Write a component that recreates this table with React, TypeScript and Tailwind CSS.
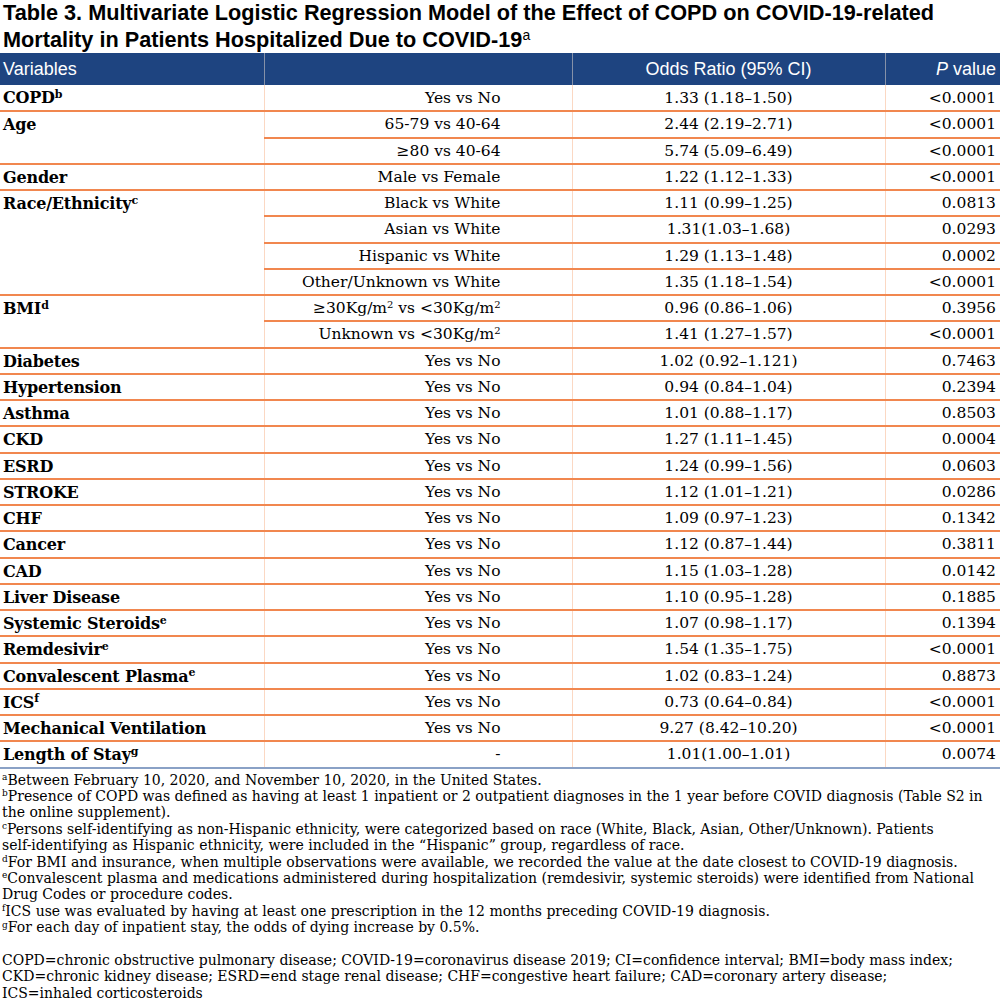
import React from 'react'

type Row = { v?: string; sup?: string; span?: number; cmp: React.ReactNode; or: string; p: string }

const m2 = (
  <>
    Kg/m<sup className="text-[10px]">2</sup>
  </>
)

const rows: Row[] = [
  { v: 'COPD', sup: 'b', cmp: 'Yes vs No', or: '1.33 (1.18–1.50)', p: '<0.0001' },
  { v: 'Age', span: 2, cmp: '65-79 vs 40-64', or: '2.44 (2.19–2.71)', p: '<0.0001' },
  { cmp: '≥80 vs 40-64', or: '5.74 (5.09–6.49)', p: '<0.0001' },
  { v: 'Gender', cmp: 'Male vs Female', or: '1.22 (1.12–1.33)', p: '<0.0001' },
  { v: 'Race/Ethnicity', sup: 'c', span: 4, cmp: 'Black vs White', or: '1.11 (0.99–1.25)', p: '0.0813' },
  { cmp: 'Asian vs White', or: '1.31(1.03–1.68)', p: '0.0293' },
  { cmp: 'Hispanic vs White', or: '1.29 (1.13–1.48)', p: '0.0002' },
  { cmp: 'Other/Unknown vs White', or: '1.35 (1.18–1.54)', p: '<0.0001' },
  {
    v: 'BMI',
    sup: 'd',
    span: 2,
    cmp: (
      <>
        ≥30{m2} vs &lt;30{m2}
      </>
    ),
    or: '0.96 (0.86–1.06)',
    p: '0.3956',
  },
  {
    cmp: (
      <>
        Unknown vs &lt;30{m2}
      </>
    ),
    or: '1.41 (1.27–1.57)',
    p: '<0.0001',
  },
  { v: 'Diabetes', cmp: 'Yes vs No', or: '1.02 (0.92–1.121)', p: '0.7463' },
  { v: 'Hypertension', cmp: 'Yes vs No', or: '0.94 (0.84–1.04)', p: '0.2394' },
  { v: 'Asthma', cmp: 'Yes vs No', or: '1.01 (0.88–1.17)', p: '0.8503' },
  { v: 'CKD', cmp: 'Yes vs No', or: '1.27 (1.11–1.45)', p: '0.0004' },
  { v: 'ESRD', cmp: 'Yes vs No', or: '1.24 (0.99–1.56)', p: '0.0603' },
  { v: 'STROKE', cmp: 'Yes vs No', or: '1.12 (1.01–1.21)', p: '0.0286' },
  { v: 'CHF', cmp: 'Yes vs No', or: '1.09 (0.97–1.23)', p: '0.1342' },
  { v: 'Cancer', cmp: 'Yes vs No', or: '1.12 (0.87–1.44)', p: '0.3811' },
  { v: 'CAD', cmp: 'Yes vs No', or: '1.15 (1.03–1.28)', p: '0.0142' },
  { v: 'Liver Disease', cmp: 'Yes vs No', or: '1.10 (0.95–1.28)', p: '0.1885' },
  { v: 'Systemic Steroids', sup: 'e', cmp: 'Yes vs No', or: '1.07 (0.98–1.17)', p: '0.1394' },
  { v: 'Remdesivir', sup: 'e', cmp: 'Yes vs No', or: '1.54 (1.35–1.75)', p: '<0.0001' },
  { v: 'Convalescent Plasma', sup: 'e', cmp: 'Yes vs No', or: '1.02 (0.83–1.24)', p: '0.8873' },
  { v: 'ICS', sup: 'f', cmp: 'Yes vs No', or: '0.73 (0.64–0.84)', p: '<0.0001' },
  { v: 'Mechanical Ventilation', cmp: 'Yes vs No', or: '9.27 (8.42–10.20)', p: '<0.0001' },
  { v: 'Length of Stay', sup: 'g', cmp: '-', or: '1.01(1.00–1.01)', p: '0.0074' },
]

const notes: [string, string[]][] = [
  ['a', ['Between February 10, 2020, and November 10, 2020, in the United States.']],
  [
    'b',
    [
      'Presence of COPD was defined as having at least 1 inpatient or 2 outpatient diagnoses in the 1 year before COVID diagnosis (Table S2 in',
      'the online supplement).',
    ],
  ],
  [
    'c',
    [
      'Persons self-identifying as non-Hispanic ethnicity, were categorized based on race (White, Black, Asian, Other/Unknown). Patients',
      'self-identifying as Hispanic ethnicity, were included in the “Hispanic” group, regardless of race.',
    ],
  ],
  ['d', ['For BMI and insurance, when multiple observations were available, we recorded the value at the date closest to COVID-19 diagnosis.']],
  [
    'e',
    [
      'Convalescent plasma and medications administered during hospitalization (remdesivir, systemic steroids) were identified from National',
      'Drug Codes or procedure codes.',
    ],
  ],
  ['f', ['ICS use was evaluated by having at least one prescription in the 12 months preceding COVID-19 diagnosis.']],
  ['g', ['For each day of inpatient stay, the odds of dying increase by 0.5%.']],
]

const abbrev = [
  'COPD=chronic obstructive pulmonary disease; COVID-19=coronavirus disease 2019; CI=confidence interval; BMI=body mass index;',
  'CKD=chronic kidney disease; ESRD=end stage renal disease; CHF=congestive heart failure; CAD=coronary artery disease;',
  'ICS=inhaled corticosteroids',
]

const serif = "font-['DejaVu_Serif',serif]"

export default function App() {
  const last = rows.length - 1
  return (
    <div className="w-[1000px] overflow-hidden bg-white text-black">
      <h1 className="px-[3px] pt-[1.5px] font-['Liberation_Sans',Arial,sans-serif] text-[21.7px] font-bold leading-[22px]">
        <span className="block">Table 3. Multivariate Logistic Regression Model of the Effect of COPD on COVID-19-related</span>
        <span className="mt-[5px] block">
          Mortality in Patients Hospitalized Due to COVID-19
          <sup className="text-[14px] font-normal">a</sup>
        </span>
      </h1>

      <table className="mt-[2.5px] w-[1000px] table-fixed border-collapse">
        <colgroup>
          <col className="w-[264px]" />
          <col className="w-[308px]" />
          <col className="w-[313px]" />
          <col className="w-[115px]" />
        </colgroup>
        <thead>
          <tr className="h-[32px] bg-[#1e4480] font-['Liberation_Sans',Arial,sans-serif] text-[18px] leading-[22px] text-white">
            <th className="border-r border-[#8591a8] px-[3px] text-left font-normal">Variables</th>
            <th className="border-r border-[#8591a8] font-normal"></th>
            <th className="border-r border-[#8591a8] text-center font-normal">Odds Ratio (95% CI)</th>
            <th className="pr-[4px] text-right font-normal">
              <i>P</i> value
            </th>
          </tr>
        </thead>
        <tbody className={`${serif} text-[15.5px] leading-[20px]`}>
          {rows.map((r, i) => {
            const b = i === last ? 'border-b-2 border-b-[#8aa1c6]' : 'border-b-2 border-b-[#f1874f]'
            return (
              <tr key={i} className="h-[26.25px]">
                {r.v !== undefined && (
                  <td
                    rowSpan={r.span ?? 1}
                    className={`${b} border-r border-r-[#fbd8c3] px-[3px] pt-[3px] align-top text-[16px] font-bold tracking-[-0.2px]`}
                  >
                    {r.v}
                    {r.sup && <sup className="text-[11px]">{r.sup}</sup>}
                  </td>
                )}
                <td className={`${b} border-r border-r-[#fbd8c3] pr-[71px] text-right`}>{r.cmp}</td>
                <td className={`${b} border-r border-r-[#fbd8c3] text-center`}>{r.or}</td>
                <td className={`${b} pr-[4px] text-right`}>{r.p}</td>
              </tr>
            )
          })}
        </tbody>
      </table>

      <div className={`${serif} px-[2px] pt-[3px] text-[14px] leading-[16.4px]`}>
        {notes.map(([k, lines]) => (
          <p key={k} className="whitespace-nowrap">
            <sup className="text-[9px]">{k}</sup>
            {lines.map((l, j) => (
              <React.Fragment key={j}>
                {j > 0 && <br />}
                {l}
              </React.Fragment>
            ))}
          </p>
        ))}
        <p className="mt-[16.4px] whitespace-nowrap">
          {abbrev.map((l, j) => (
            <React.Fragment key={j}>
              {j > 0 && <br />}
              {l}
            </React.Fragment>
          ))}
        </p>
      </div>
    </div>
  )
}
